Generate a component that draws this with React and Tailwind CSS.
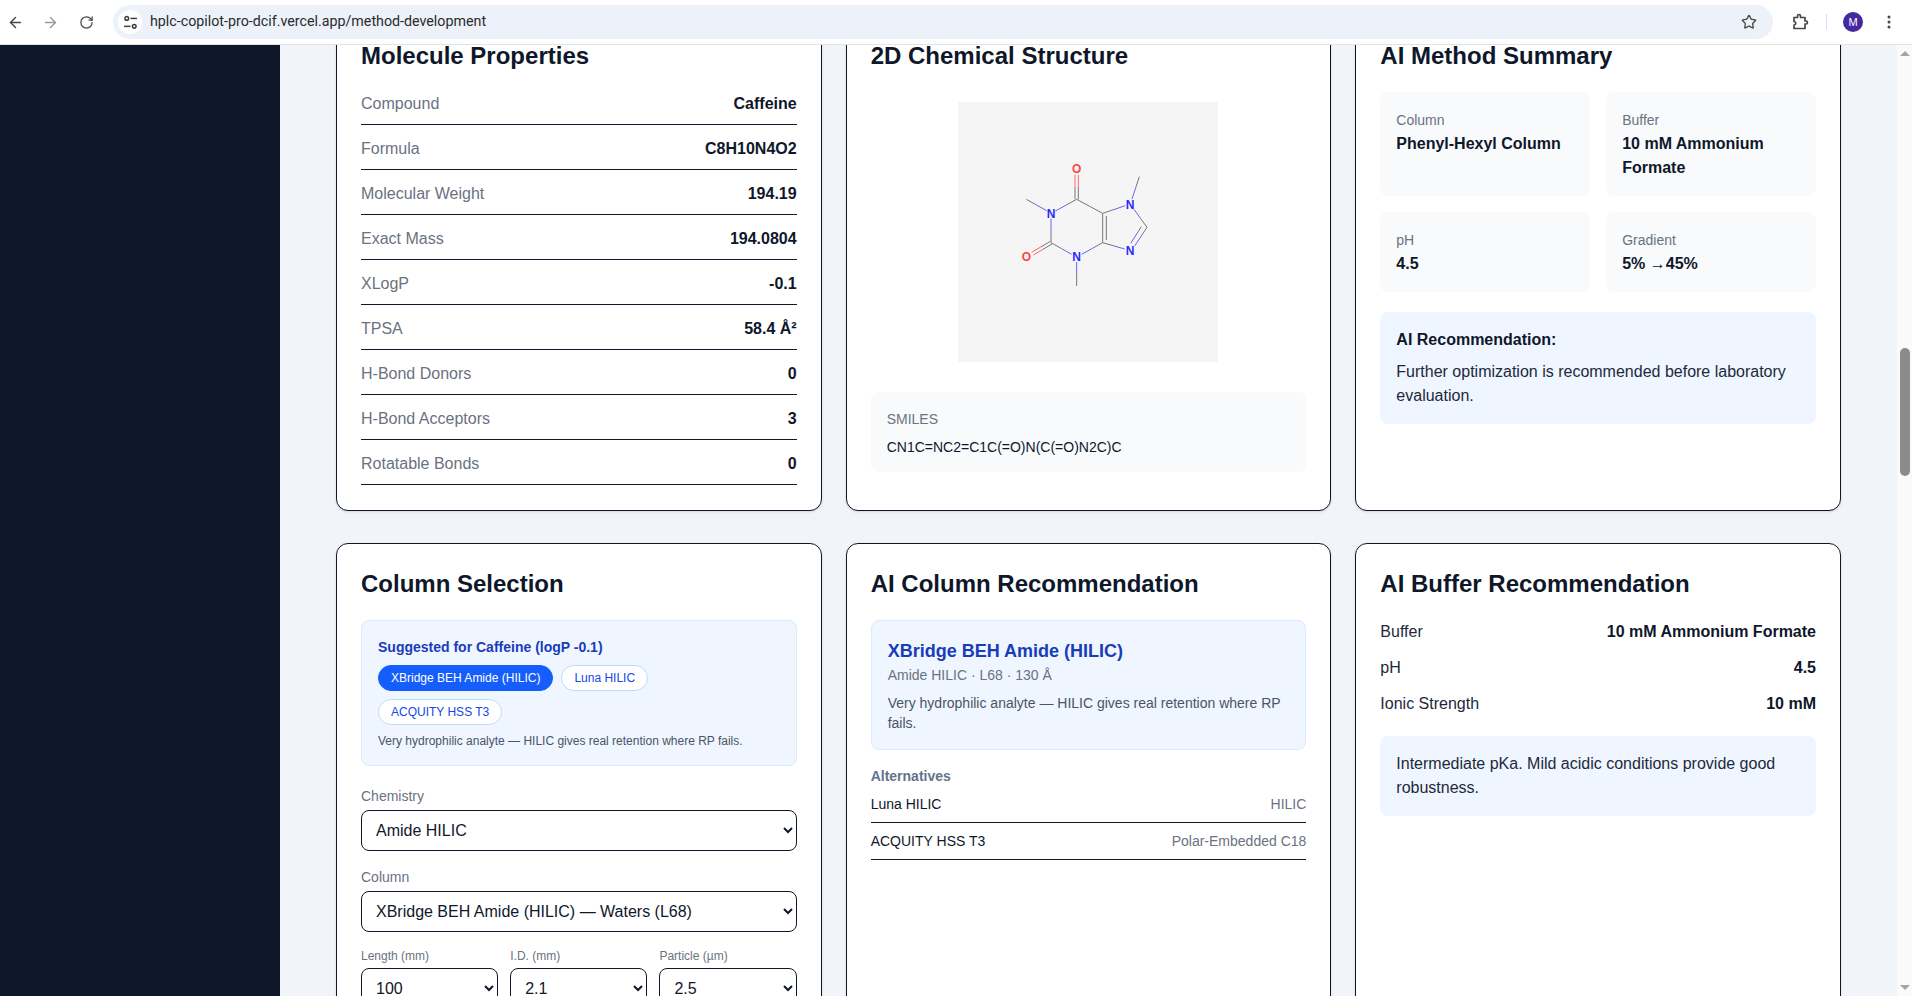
import { ArrowLeft, ArrowRight, RotateCw, Star } from "lucide-react";

const properties = [
  ["Compound", "Caffeine"],
  ["Formula", "C8H10N4O2"],
  ["Molecular Weight", "194.19"],
  ["Exact Mass", "194.0804"],
  ["XLogP", "-0.1"],
  ["TPSA", "58.4 Å²"],
  ["H-Bond Donors", "0"],
  ["H-Bond Acceptors", "3"],
  ["Rotatable Bonds", "0"],
];

function Card({ title, titleClass = "mb-5", children }) {
  return (
    <div className="rounded-xl border border-[#0f172a] bg-white p-6 shadow-sm">
      <h2 className={`text-2xl leading-8 font-bold text-[#0f172a] ${titleClass}`}>{title}</h2>
      {children}
    </div>
  );
}

function Tile({ label, value }) {
  return (
    <div className="rounded-lg bg-[#f8fafc] p-4">
      <div className="pt-0.5 text-sm text-[#6b7280]">{label}</div>
      <div className="mt-0.5 font-bold text-[#0f172a]">{value}</div>
    </div>
  );
}

function Field({ label, value, small }) {
  return (
    <div>
      <label className={`block text-[#6b7280] ${small ? "mb-1 text-xs leading-4" : "mb-1 text-sm"}`}>{label}</label>
      <select defaultValue={value} className="h-[41px] w-full rounded-lg border border-[#0f172a] bg-white px-2.5 text-base text-[#0f172a]">
        <option>{value}</option>
      </select>
    </div>
  );
}

// half grey, half coloured bond like the PubChem depiction
function Bond({ a, b, end = "#6666ee", start = "#777777" }) {
  const mx = (a[0] + b[0]) / 2;
  const my = (a[1] + b[1]) / 2;
  return (
    <g strokeWidth="3" fill="none">
      <line x1={a[0]} y1={a[1]} x2={mx} y2={my} stroke={start} />
      <line x1={mx} y1={my} x2={b[0]} y2={b[1]} stroke={end} />
    </g>
  );
}

function Caffeine() {
  const gray = "#777777";
  const red = "#ff6666";
  const atoms = [
    ["O", 290, 87, "#ff4444"],
    ["O", 139, 350, "#ff4444"],
    ["N", 213, 220, "#2a2aff"],
    ["N", 290, 350, "#2a2aff"],
    ["N", 450, 193, "#2a2aff"],
    ["N", 450, 332, "#2a2aff"],
  ];
  return (
    <svg viewBox="0 0 780 780" className="h-[260px] w-[260px] bg-[#f5f5f5]">
      <g transform="translate(66 114)">
        <Bond a={[285, 178]} b={[285, 104]} end={red} />
        <Bond a={[295, 178]} b={[295, 104]} end={red} />
        <Bond a={[290, 178]} b={[226, 213]} />
        <Bond a={[139, 178]} b={[200, 212]} start={gray} />
        <Bond a={[213, 308]} b={[213, 236]} />
        <Bond a={[211, 304]} b={[155, 337]} end={red} />
        <Bond a={[216, 312]} b={[160, 345]} end={red} />
        <Bond a={[213, 308]} b={[275, 343]} />
        <Bond a={[290, 438]} b={[290, 366]} />
        <Bond a={[368, 308]} b={[305, 343]} />
        <Bond a={[368, 308]} b={[368, 220]} end={gray} />
        <Bond a={[379, 300]} b={[379, 228]} end={gray} />
        <Bond a={[368, 220]} b={[290, 178]} end={gray} />
        <Bond a={[368, 220]} b={[436, 197]} />
        <Bond a={[478, 110]} b={[456, 177]} />
        <Bond a={[501, 262]} b={[462, 208]} />
        <Bond a={[501, 262]} b={[464, 318]} />
        <Bond a={[484, 260]} b={[452, 310]} />
        <Bond a={[368, 308]} b={[434, 327]} />
        {atoms.map(([t, x, y, c], i) => (
          <text key={i} x={x} y={y + 13} textAnchor="middle" fontSize="36" fontWeight="700" fill={c}>
            {t}
          </text>
        ))}
      </g>
    </svg>
  );
}

function Toolbar() {
  return (
    <div className="flex h-[45px] shrink-0 items-center border-b border-[#e3e3e3] bg-white text-[#474747]">
      <div className="flex w-[113px] items-center pl-[7px]">
        <ArrowLeft size={17} strokeWidth={2} />
        <ArrowRight size={17} strokeWidth={2} className="ml-[18px] text-[#9a9a9a]" />
        <RotateCw size={15} strokeWidth={2} className="ml-[20px]" />
      </div>
      <div className="flex h-[34px] w-[1660px] items-center rounded-full bg-[#edf2fa] pl-[5px] pr-[16px]">
        <div className="flex h-6 w-6 items-center justify-center rounded-full bg-white">
          <svg width="15" height="15" viewBox="0 0 14 14" fill="none" stroke="#3c3c3c" strokeWidth="1.4">
            <circle cx="3.5" cy="3.2" r="1.7" />
            <line x1="7" y1="3.2" x2="13" y2="3.2" />
            <circle cx="10.5" cy="10.6" r="1.7" />
            <line x1="1" y1="10.6" x2="7" y2="10.6" />
          </svg>
        </div>
        <span className="ml-[8px] flex-1 font-['Roboto',sans-serif] text-[14.25px] text-[#2a2a2a]">
          hplc-copilot-pro-dcif.vercel.app/method-development
        </span>
        <Star size={16} strokeWidth={2} />
      </div>
      <svg width="18" height="18" viewBox="0 0 18 18" fill="none" stroke="#474747" strokeWidth="1.7" className="ml-[18px]">
        <path d="M3 4.5h3.5V3a1.5 1.5 0 0 1 3 0v1.5H14V8h1a1.5 1.5 0 0 1 0 3h-1v4.5H3V12a1.7 1.7 0 0 0 0-3.5Z" strokeLinejoin="round" />
      </svg>
      <div className="ml-[17px] h-4 w-px bg-[#d3e3fd]" />
      <div className="ml-[16px] flex h-5 w-5 items-center justify-center rounded-full bg-[#4527a0] text-[11px] text-white">M</div>
      <svg width="4" height="14" viewBox="0 0 4 14" fill="#474747" className="ml-[24px]">
        <circle cx="2" cy="2" r="1.5" />
        <circle cx="2" cy="7" r="1.5" />
        <circle cx="2" cy="12" r="1.5" />
      </svg>
    </div>
  );
}

function Scrollbar() {
  return (
    <div className="flex w-[15px] shrink-0 flex-col items-center bg-[#fafafa]">
      <div className="mt-1.5 h-0 w-0 border-x-[5px] border-b-[5px] border-x-transparent border-b-[#a3a3a3]" />
      <div className="mt-[292px] h-[128px] w-[10px] rounded-full bg-[#8b8b8b]" />
      <div className="mt-auto mb-1.5 h-0 w-0 border-x-[5px] border-t-[5px] border-x-transparent border-t-[#a3a3a3]" />
    </div>
  );
}

export default function App() {
  return (
    <div className="flex h-screen flex-col overflow-hidden font-['Liberation_Sans',Arial,sans-serif]">
      <Toolbar />
      <div className="flex min-h-0 flex-1">
        <aside className="w-[280px] shrink-0 bg-[#0f172a]" />
        <main className="relative z-0 min-w-0 flex-1 overflow-hidden bg-[#f1f5f9] px-14">
          {/* page is scrolled, top of the first row sits under the toolbar */}
          <div className="-mt-[30px] grid grid-cols-3 gap-x-6 gap-y-8">
            <Card title="Molecule Properties" titleClass="mb-2">
              <div className="mb-px">
                {properties.map(([k, v]) => (
                  <div key={k} className="flex justify-between border-b border-[#0f172a] pt-3 pb-2">
                    <span className="text-[#6b7280]">{k}</span>
                    <span className="font-bold text-[#0f172a]">{v}</span>
                  </div>
                ))}
              </div>
            </Card>

            <Card title="2D Chemical Structure">
              <div className="mb-5 flex justify-center py-2.5">
                <Caffeine />
              </div>
              <div className="rounded-lg bg-[#f8fafc] px-4 pt-[17px] pb-[15px]">
                <div className="text-sm text-[#6b7280]">SMILES</div>
                <div className="mt-2 text-sm text-[#0f172a]">CN1C=NC2=C1C(=O)N(C(=O)N2C)C</div>
              </div>
            </Card>

            <Card title="AI Method Summary">
              <div className="grid grid-cols-2 gap-4">
                <Tile label="Column" value="Phenyl-Hexyl Column" />
                <Tile label="Buffer" value="10 mM Ammonium Formate" />
                <Tile label="pH" value="4.5" />
                <Tile label="Gradient" value="5% →45%" />
              </div>
              <div className="mt-5 rounded-lg bg-[#eff6ff] p-4">
                <div className="mb-2 font-bold text-[#0f172a]">AI Recommendation:</div>
                <p className="text-[#1e293b]">Further optimization is recommended before laboratory evaluation.</p>
              </div>
            </Card>

            <Card title="Column Selection">
              <div className="rounded-lg border border-[#dbeafe] bg-[#eff6ff] p-4">
                <div className="mb-2 text-sm leading-5 font-bold text-[#193cb8]">Suggested for Caffeine (logP -0.1)</div>
                <div className="flex flex-wrap gap-2">
                  <span className="rounded-full border border-[#155dfc] bg-[#155dfc] px-3 py-1 text-xs leading-4 text-white">XBridge BEH Amide (HILIC)</span>
                  <span className="rounded-full border border-[#bedbff] bg-white px-3 py-1 text-xs leading-4 text-[#1447e6]">Luna HILIC</span>
                  <span className="rounded-full border border-[#bedbff] bg-white px-3 py-1 text-xs leading-4 text-[#1447e6]">ACQUITY HSS T3</span>
                </div>
                <p className="mt-2 text-xs leading-4 text-[#4a5565]">Very hydrophilic analyte — HILIC gives real retention where RP fails.</p>
              </div>
              <div className="mt-5 flex flex-col gap-4">
                <Field label="Chemistry" value="Amide HILIC" />
                <Field label="Column" value="XBridge BEH Amide (HILIC) — Waters (L68)" />
                <div className="grid grid-cols-3 gap-3">
                  <Field small label="Length (mm)" value="100" />
                  <Field small label="I.D. (mm)" value="2.1" />
                  <Field small label="Particle (µm)" value="2.5" />
                </div>
              </div>
            </Card>

            <Card title="AI Column Recommendation">
              <div className="rounded-lg border border-[#dbeafe] bg-[#eff6ff] p-4">
                <div className="text-lg leading-7 font-bold text-[#193cb8]">XBridge BEH Amide (HILIC)</div>
                <div className="text-sm text-[#6b7280]">Amide HILIC · L68 · 130 Å</div>
                <p className="mt-2 text-sm text-[#4a5565]">Very hydrophilic analyte — HILIC gives real retention where RP fails.</p>
              </div>
              <div className="mt-4 text-sm leading-5 font-bold text-[#62748e]">Alternatives</div>
              <div className="flex justify-between border-b border-[#0f172a] py-2 text-sm">
                <span className="text-[#0f172a]">Luna HILIC</span>
                <span className="text-[#6b7280]">HILIC</span>
              </div>
              <div className="flex justify-between border-b border-[#0f172a] py-2 text-sm">
                <span className="text-[#0f172a]">ACQUITY HSS T3</span>
                <span className="text-[#6b7280]">Polar-Embedded C18</span>
              </div>
            </Card>

            <Card title="AI Buffer Recommendation" titleClass="mb-3.5">
              {[
                ["Buffer", "10 mM Ammonium Formate"],
                ["pH", "4.5"],
                ["Ionic Strength", "10 mM"],
              ].map(([k, v]) => (
                <div key={k} className="flex justify-between py-1.5 text-[#1e293b]">
                  <span>{k}</span>
                  <span className="font-bold text-[#0f172a]">{v}</span>
                </div>
              ))}
              <div className="mt-3.5 rounded-lg bg-[#eff6ff] p-4 text-[#1e293b]">Intermediate pKa. Mild acidic conditions provide good robustness.</div>
            </Card>
          </div>
        </main>
        <Scrollbar />
      </div>
    </div>
  );
}
